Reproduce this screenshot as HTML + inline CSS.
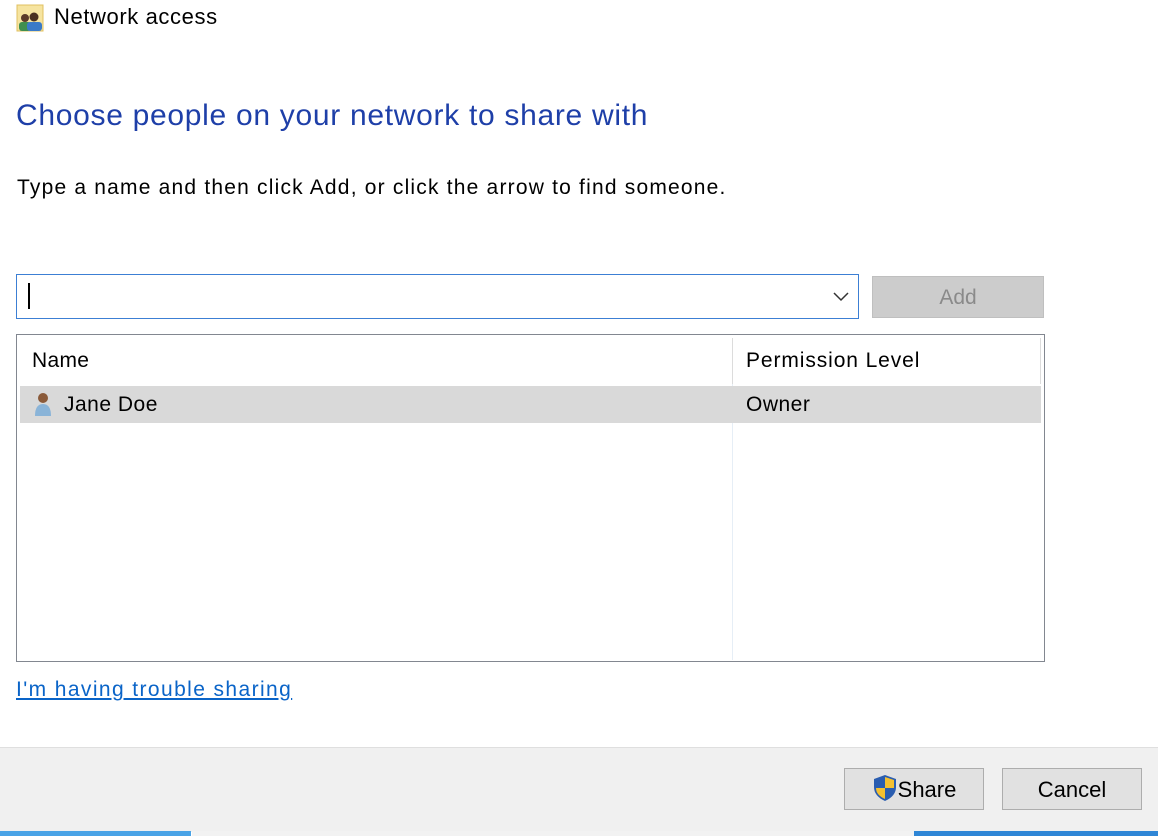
<!DOCTYPE html>
<html><head><meta charset="utf-8"><style>
body{margin:0;width:1158px;height:836px;background:#fff;position:relative;overflow:hidden;font-family:"Liberation Sans",sans-serif;color:#000}
.a{position:absolute;white-space:nowrap}
</style></head><body>
<svg class="a" style="left:16px;top:4px" width="30" height="28" viewBox="0 0 30 28">
<rect x="1" y="1" width="26" height="26" fill="#f6e4a0" stroke="#e0c060"/>
<circle cx="9" cy="14" r="4" fill="#5a3a2a"/><rect x="3" y="18" width="12" height="9" rx="3" fill="#3f8f4f"/>
<circle cx="18" cy="13" r="4.5" fill="#4a3020"/><rect x="11" y="18" width="15" height="9" rx="3" fill="#3a7ac8"/>
</svg>
<div class="a" style="left:54px;top:4px;font-size:22px;letter-spacing:0.6px">Network access</div>
<div class="a" style="left:16px;top:99px;font-size:30px;letter-spacing:0.7px;color:#1e3fa8">Choose people on your network to share with</div>
<div class="a" style="left:17px;top:176px;font-size:21px;letter-spacing:1.2px">Type a name and then click Add, or click the arrow to find someone.</div>
<div class="a" style="left:16px;top:274px;width:841px;height:43px;border:1px solid #3c7fd4"></div>
<div class="a" style="left:28px;top:283px;width:2px;height:26px;background:#000"></div>
<svg class="a" style="left:832px;top:290px" width="18" height="12"><path d="M2 3 L9 10 L16 3" fill="none" stroke="#333" stroke-width="1.5"/></svg>
<div class="a" style="left:872px;top:276px;width:170px;height:40px;background:#ccc;border:1px solid #bfbfbf;color:#8a8a8a;font-size:21px;text-align:center;line-height:42px">Add</div>
<div class="a" style="left:16px;top:334px;width:1027px;height:326px;border:1px solid #828790"></div>
<div class="a" style="left:732px;top:338px;width:1px;height:322px;background:#e6eef6"></div>
<div class="a" style="left:732px;top:338px;width:1px;height:46px;background:#dcdcdc"></div>
<div class="a" style="left:1040px;top:338px;width:1px;height:46px;background:#dcdcdc"></div>
<div class="a" style="left:32px;top:349px;font-size:21px;letter-spacing:0.3px">Name</div>
<div class="a" style="left:746px;top:349px;font-size:21px;letter-spacing:0.9px">Permission Level</div>
<div class="a" style="left:20px;top:386px;width:1021px;height:37px;background:#d9d9d9"></div>
<svg class="a" style="left:32px;top:391px" width="22" height="26" viewBox="0 0 22 26">
<circle cx="11" cy="7" r="5" fill="#8a5a3a"/><path d="M3 25 Q3 13 11 13 Q19 13 19 25Z" fill="#8ab4d8"/></svg>
<div class="a" style="left:64px;top:393px;font-size:21px;letter-spacing:0.5px">Jane Doe</div>
<div class="a" style="left:746px;top:393px;font-size:21px;letter-spacing:0.5px">Owner</div>
<div class="a" style="left:16px;top:678px;font-size:21px;letter-spacing:1.4px;color:#0a64c8;text-decoration:underline">I'm having trouble sharing</div>
<div class="a" style="left:0;top:747px;width:1158px;height:84px;background:#f0f0f0;border-top:1px solid #dfdfdf"></div>
<div class="a" style="left:844px;top:768px;width:138px;height:40px;background:#e1e1e1;border:1px solid #adadad;font-size:22px;line-height:42px;text-align:center"><svg style="vertical-align:-5px" width="26" height="28" viewBox="0 0 26 28"><path d="M13 1 L24 5 V13 Q24 22 13 27 Q2 22 2 13 V5Z" fill="#2a5db0"/><path d="M13 3 V14 H22 V6Z" fill="#f4c030"/><path d="M13 14 V25 Q4 21 4 14Z" fill="#f4c030"/></svg>Share</div>
<div class="a" style="left:1002px;top:768px;width:138px;height:40px;background:#e1e1e1;border:1px solid #adadad;font-size:22px;line-height:42px;text-align:center">Cancel</div>
<div class="a" style="left:0;top:831px;width:191px;height:5px;background:#4aa3e6"></div>
<div class="a" style="left:192px;top:831px;width:722px;height:5px;background:#f2f2f2"></div>
<div class="a" style="left:914px;top:831px;width:244px;height:5px;background:#2f86d6"></div>
</body></html>
